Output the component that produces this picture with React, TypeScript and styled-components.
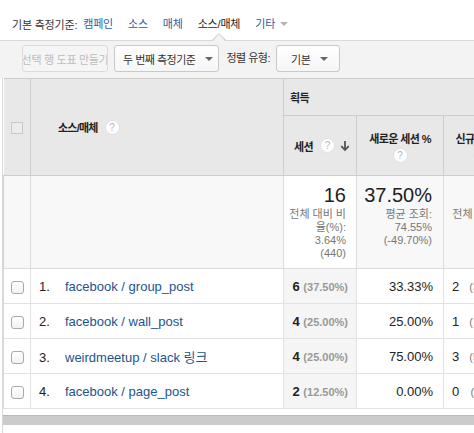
import React from 'react';
import styled, { createGlobalStyle } from 'styled-components';

const GlobalStyle = createGlobalStyle`
  html, body {
    margin: 0;
    padding: 0;
    background: #fff;
  }
  body {
    width: 474px;
    height: 433px;
    overflow: hidden;
    font-family: "Liberation Sans", Arial, "Noto Sans CJK KR", sans-serif;
    color: #222;
  }
`;

type Row = {
  label: string;
  sessions: number;
  share: string;
  newRate: string;
  newUsers: number;
  newShare: string;
};

const rows: Row[] = [
  { label: 'facebook / group_post', sessions: 6, share: '37.50%', newRate: '33.33%', newUsers: 2, newShare: '33.33%' },
  { label: 'facebook / wall_post', sessions: 4, share: '25.00%', newRate: '25.00%', newUsers: 1, newShare: '16.67%' },
  { label: 'weirdmeetup / slack 링크', sessions: 4, share: '25.00%', newRate: '75.00%', newUsers: 3, newShare: '50.00%' },
  { label: 'facebook / page_post', sessions: 2, share: '12.50%', newRate: '0.00%', newUsers: 0, newShare: '0.00%' },
];

const tabs = ['캠페인', '소스', '매체', '소스/매체'];
const activeTab = '소스/매체';

const App = () => (
  <>
    <GlobalStyle />
    <TabBar>
      <TabLabel>기본 측정기준:</TabLabel>
      <TabList>
        {tabs.map(t => (
          <Tab key={t} $active={t === activeTab}>{t}</Tab>
        ))}
        <Tab>
          기타<MoreCaret />
        </Tab>
      </TabList>
    </TabBar>

    <Toolbar>
      <GhostButton disabled>선택 행 도표 만들기</GhostButton>
      <DropButton $left={8} $right={5}>
        두 번째 측정기준<Caret />
      </DropButton>
      <ToolLabel>정렬 유형:</ToolLabel>
      <DropButton $left={14} $right={11}>
        기본<Caret />
      </DropButton>
    </Toolbar>

    <Grid>
      <Table>
        <colgroup>
          <col style={{ width: 27 }} />
          <col style={{ width: 253 }} />
          <col style={{ width: 73 }} />
          <col style={{ width: 87 }} />
          <col style={{ width: 74 }} />
        </colgroup>
        <thead>
          <tr>
            <HeadCell rowSpan={2} $center>
              <HeadBox />
            </HeadCell>
            <HeadCell rowSpan={2}>
              <DimHead>
                소스/매체<Help>?</Help>
              </DimHead>
            </HeadCell>
            <GroupCell colSpan={3}>획득</GroupCell>
          </tr>
          <tr>
            <MetricCell>
              <SortHead>
                세션<Help $gap={8}>?</Help>
                <SortArrow viewBox="0 0 10 12">
                  <path d="M5 1v9M1.2 6.2 5 10l3.8-3.8" fill="none" stroke="#555" strokeWidth="1.8" />
                </SortArrow>
              </SortHead>
            </MetricCell>
            <MetricCell $center>
              <StackHead>
                새로운 세션 %<Help>?</Help>
              </StackHead>
            </MetricCell>
            <MetricCell $center>
              <StackHead>
                신규 사용자<Help>?</Help>
              </StackHead>
            </MetricCell>
          </tr>
        </thead>
        <tbody>
          <tr>
            <SumCell />
            <SumCell />
            <SumCell $sorted $padRight={10}>
              <Big>16</Big>
              <Note>
                <span>전체 대비 비</span>
                <span>율(%):</span>
                <span>3.64%</span>
                <span>(440)</span>
              </Note>
            </SumCell>
            <SumCell $padRight={11}>
              <Big>37.50%</Big>
              <Note>
                <span>평균 조회:</span>
                <span>74.55%</span>
                <span>(-49.70%)</span>
              </Note>
            </SumCell>
            <SumCell $padRight={8}>
              <Big>6</Big>
              <Note>
                <span>전체 대비 비</span>
                <span>율(%):</span>
                <span>1.61%</span>
                <span>(373)</span>
              </Note>
            </SumCell>
          </tr>
          {rows.map((r, i) => (
            <tr key={r.label}>
              <Cell $center>
                <RowBox />
              </Cell>
              <Cell>
                <RowNum>{i + 1}.</RowNum>
                <DimLink>{r.label}</DimLink>
              </Cell>
              <Cell $sorted $right>
                <Strong>{r.sessions}</Strong> <Share>({r.share})</Share>
              </Cell>
              <Cell $right>{r.newRate}</Cell>
              <Cell>
                <Split>
                  <span>{r.newUsers}</span>
                  <Share $plain>({r.newShare})</Share>
                </Split>
              </Cell>
            </tr>
          ))}
        </tbody>
      </Table>
      <ScrollTrack />
    </Grid>
  </>
);

const TabBar = styled.div`
  height: 40px;
  box-sizing: border-box;
  padding: 8px 0 0 12px;
  display: flex;
  align-items: center;
  font-size: 11px;
  letter-spacing: -0.2px;
`;

const TabLabel = styled.span`
  color: #333;
`;

const TabList = styled.div`
  display: flex;
  align-items: center;
  gap: 15px;
  margin-left: 6px;
`;

const Tab = styled.span<{ $active?: boolean }>`
  position: relative;
  line-height: 16px;
  display: inline-flex;
  align-items: center;
  color: ${p => (p.$active ? '#222' : '#2f5ba6')};
  cursor: pointer;
  ${p => p.$active && `
    &::before, &::after {
      content: '';
      position: absolute;
      left: 50%;
      border-style: solid;
      border-color: transparent;
    }
    &::before {
      top: calc(100% + 1px);
      margin-left: -7px;
      border-width: 0 7px 7px;
      border-bottom-color: #cfcfcf;
    }
    &::after {
      top: calc(100% + 2px);
      margin-left: -6px;
      border-width: 0 6px 7px;
      border-bottom-color: #f3f3f3;
    }
  `}
`;

const MoreCaret = styled.span`
  width: 0;
  height: 0;
  margin-left: 5px;
  border-left: 4px solid transparent;
  border-right: 4px solid transparent;
  border-top: 4px solid #b5b5b5;
`;

const Toolbar = styled.div`
  height: 38px;
  box-sizing: border-box;
  border-top: 1px solid #d9d9d9;
  background: #f3f3f3;
  display: flex;
  align-items: flex-start;
  gap: 6px;
  padding: 4px 0 0 22px;
  font-size: 11px;
  letter-spacing: -0.5px;
`;

const buttonBase = `
  height: 27px;
  box-sizing: border-box;
  border-radius: 3px;
  font-family: inherit;
  font-size: 11px;
  letter-spacing: -0.5px;
  white-space: nowrap;
  display: inline-flex;
  align-items: center;
`;

const GhostButton = styled.button`
  ${buttonBase}
  width: 86px;
  padding: 0;
  justify-content: center;
  overflow: hidden;
  letter-spacing: -0.3px;
  border: 1px solid #dcdcdc;
  background: #f5f5f5;
  color: #bdbdbd;
`;

const DropButton = styled.button<{ $left: number; $right: number }>`
  ${buttonBase}
  padding: 0 ${p => p.$right}px 0 ${p => p.$left}px;
  gap: 10px;
  border: 1px solid #c9c9c9;
  background: linear-gradient(#ffffff, #f6f6f6);
  color: #333;
  cursor: pointer;
`;

const Caret = styled.span`
  width: 0;
  height: 0;
  margin-top: 1px;
  border-left: 4px solid transparent;
  border-right: 4px solid transparent;
  border-top: 4px solid #666;
`;

const ToolLabel = styled.span`
  line-height: 27px;
  color: #333;
  margin: 0 0 0 1px;
`;

const Grid = styled.div`
  height: 355px;
  margin-left: 2px;
  border-left: 1px solid #d8d8d8;
  overflow: hidden;
`;

const Table = styled.table`
  width: 514px;
  table-layout: fixed;
  border-collapse: collapse;
  font-size: 13px;
  color: #222;
`;

const HeadCell = styled.th<{ $center?: boolean }>`
  background: #e8e8e8;
  border: 1px solid #cdcdcd;
  border-left: 0;
  padding: 0;
  text-align: ${p => (p.$center ? 'center' : 'left')};
  vertical-align: middle;
  font-weight: bold;
`;

const GroupCell = styled.th`
  height: 36px;
  background: #e8e8e8;
  border: 1px solid #cdcdcd;
  border-right: 0;
  padding: 0 0 0 6px;
  text-align: left;
  vertical-align: middle;
  font-size: 11px;
  letter-spacing: -0.6px;
  font-weight: bold;
`;

const MetricCell = styled.th<{ $center?: boolean }>`
  height: 59px;
  background: #e8e8e8;
  border: 1px solid #cdcdcd;
  padding: 0;
  text-align: ${p => (p.$center ? 'center' : 'left')};
  vertical-align: middle;
  font-size: 11px;
  letter-spacing: -0.6px;
  font-weight: bold;
`;

const HeadBox = styled.span`
  display: inline-block;
  width: 12px;
  height: 12px;
  box-sizing: border-box;
  border: 1px solid #c8c8c8;
  background: #ececec;
  vertical-align: middle;
`;

const DimHead = styled.div`
  display: flex;
  align-items: center;
  padding-left: 27px;
  font-size: 11px;
  letter-spacing: -0.8px;
  > span {
    margin-left: 8px;
  }
`;

const Help = styled.span<{ $gap?: number }>`
  display: inline-flex;
  align-items: center;
  justify-content: center;
  width: 13px;
  height: 13px;
  margin-left: ${p => p.$gap ?? 0}px;
  border-radius: 50%;
  background: #fff;
  box-shadow: 0 0 0 1px #e2e2e2;
  color: #b4b4b4;
  font-size: 10px;
  font-weight: normal;
  letter-spacing: 0;
`;

const SortHead = styled.div`
  display: flex;
  align-items: center;
  padding: 0 6px 0 10px;
`;

const SortArrow = styled.svg`
  width: 10px;
  height: 12px;
  margin-left: auto;
`;

const StackHead = styled.div`
  display: flex;
  flex-direction: column;
  align-items: center;
  gap: 3px;
  white-space: nowrap;
`;

const SumCell = styled.td<{ $sorted?: boolean; $padRight?: number }>`
  height: 84px;
  padding: 8px ${p => p.$padRight ?? 0}px 0 0;
  background: ${p => (p.$sorted ? '#fff' : '#f8f8f8')};
  border: 1px solid #dcdcdc;
  border-left-color: #d3d3d3;
  text-align: right;
  vertical-align: top;
`;

const Big = styled.div`
  font-size: 20px;
  line-height: 22px;
  color: #222;
`;

const Note = styled.div`
  display: flex;
  flex-direction: column;
  align-items: flex-end;
  margin-top: 2px;
  font-size: 11px;
  line-height: 13px;
  color: #777;
  white-space: nowrap;
`;

const Cell = styled.td<{ $sorted?: boolean; $right?: boolean; $center?: boolean }>`
  height: 34px;
  padding: 0 ${p => (p.$right ? (p.$sorted ? 8 : 10) : 0)}px 0 ${p => (p.$right || p.$center ? 0 : 8)}px;
  background: ${p => (p.$sorted ? '#f5f5f5' : '#fff')};
  border: 1px solid #e2e2e2;
  border-left-color: #dadada;
  text-align: ${p => (p.$center ? 'center' : p.$right ? 'right' : 'left')};
  vertical-align: middle;
  white-space: nowrap;
  overflow: hidden;
`;

const RowBox = styled.span`
  display: inline-block;
  width: 13px;
  height: 13px;
  box-sizing: border-box;
  border: 1px solid #a9a9a9;
  border-radius: 3px;
  background: linear-gradient(#fff, #f2f2f2);
  vertical-align: middle;
`;

const RowNum = styled.span`
  display: inline-block;
  width: 26px;
`;

const DimLink = styled.a`
  color: #22538f;
  text-decoration: none;
  cursor: pointer;
`;

const Strong = styled.b`
  font-weight: bold;
`;

const Share = styled.span<{ $plain?: boolean }>`
  font-size: 11px;
  font-weight: ${p => (p.$plain ? 'normal' : 'bold')};
  color: ${p => (p.$plain ? '#777' : '#999')};
`;

const Split = styled.div`
  display: flex;
  justify-content: space-between;
  align-items: baseline;
  gap: 10px;
  padding-right: 8px;
`;

const ScrollTrack = styled.div`
  height: 10px;
  margin: 6px 0 0 0;
  box-sizing: border-box;
  border-top: 1px solid #b9b9b9;
  background: #cbcbcb;
`;

export default App;
